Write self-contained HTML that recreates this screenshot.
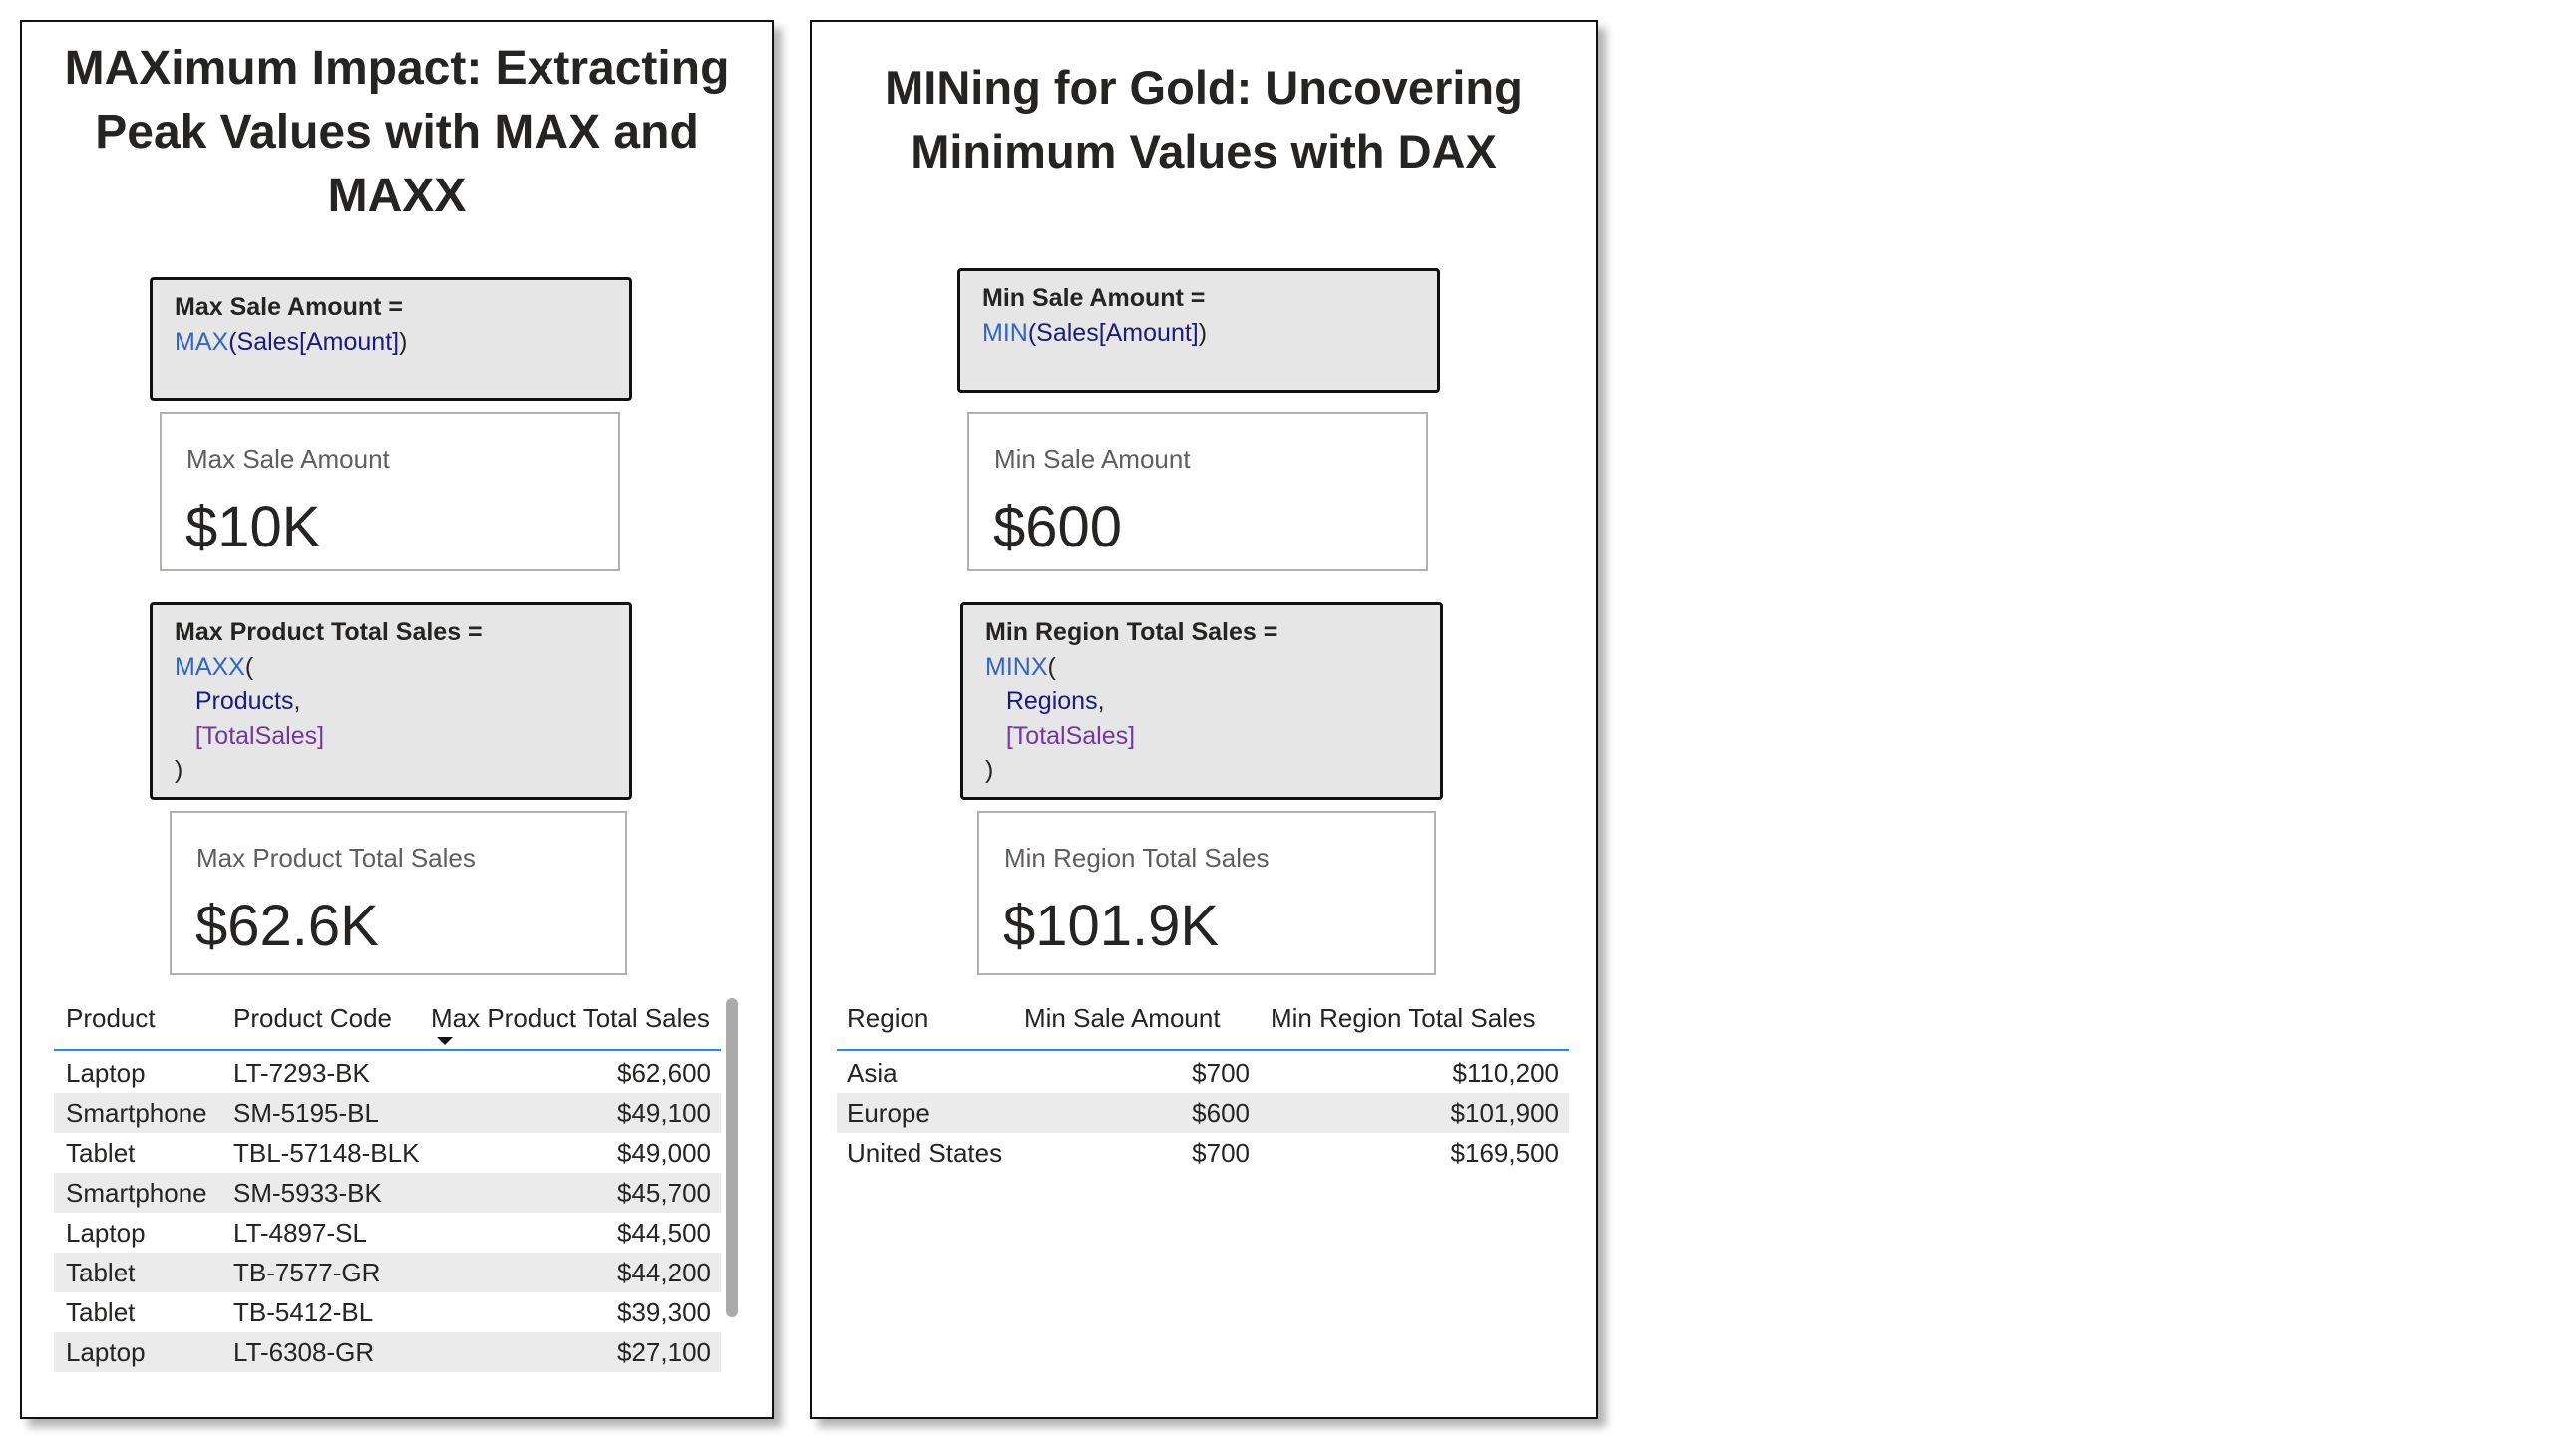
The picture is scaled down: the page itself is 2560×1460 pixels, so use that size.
<!DOCTYPE html>
<html><head><meta charset="utf-8"><style>
*{margin:0;padding:0;box-sizing:border-box}
body{width:2560px;height:1460px;background:#fff;position:relative;overflow:hidden;font-family:"Liberation Sans",Arial,sans-serif;color:#252423}
.abs{position:absolute}
.panel{position:absolute;border:2px solid #111;background:#fff;box-shadow:8px 8px 8px rgba(0,0,0,.3)}
.title{position:absolute;text-align:center;font-weight:bold;font-size:48px;line-height:64px;color:#252423}
.dax{position:absolute;background:#e6e6e6;border:3px solid #111;border-radius:4px;font-size:25px;line-height:34.5px;padding:10px 0 0 22px}
.dax b{color:#252423}
.fn{color:#3165c4}.tb{color:#1a1a80}.ms{color:#7436a6}
.card{position:absolute;border:2px solid #b3b0ad;background:#fff}
.card .l{position:absolute;left:25px;top:30px;font-size:26px;color:#605e5c}
.card .v{position:absolute;left:24px;top:80px;font-size:58px;color:#252423}
.row{position:absolute;height:40px;font-size:26px;line-height:40px}
.row span{position:absolute;white-space:nowrap}
.sh{background:#ebebeb}
</style></head><body>

<div class="panel" style="left:20px;top:20px;width:756px;height:1403px"></div>
<div class="panel" style="left:812px;top:20px;width:790px;height:1403px"></div>

<div class="title" style="left:22px;width:752px;top:37px">MAXimum Impact: Extracting<br>Peak Values with MAX and<br>MAXX</div>
<div class="title" style="left:814px;width:786px;top:56px;font-size:47px">MINing for Gold: Uncovering<br>Minimum Values with DAX</div>

<!-- left -->
<div class="dax" style="left:150px;top:278px;width:484px;height:124px"><b>Max Sale Amount =</b><br><span class="fn">MAX</span><span class="tb">(Sales[Amount]</span>)</div>
<div class="card" style="left:160px;top:413px;width:462px;height:160px"><div class="l">Max Sale Amount</div><div class="v">$10K</div></div>
<div class="dax" style="left:150px;top:604px;width:484px;height:198px"><b>Max Product Total Sales =</b><br><span class="fn">MAXX</span>(<br>&nbsp;&nbsp;&nbsp;<span class="tb">Products</span>,<br>&nbsp;&nbsp;&nbsp;<span class="ms">[TotalSales]</span><br>)</div>
<div class="card" style="left:170px;top:813px;width:459px;height:165px"><div class="l">Max Product Total Sales</div><div class="v">$62.6K</div></div>

<div class="row" style="left:54px;top:1001px;width:669px"><span style="left:12px">Product</span><span style="left:180px">Product Code</span><span style="left:378px">Max Product Total Sales</span></div>
<div class="abs" style="left:438px;top:1040px;width:0;height:0;border-left:8px solid transparent;border-right:8px solid transparent;border-top:8px solid #111"></div>
<div class="abs" style="left:54px;top:1052px;width:669px;height:2px;background:#1d8cf0"></div>
<div class="abs" style="left:728px;top:1001px;width:12px;height:320px;background:#aaa;border-radius:6px"></div>
<div class="abs" style="left:54px;top:1054px;width:669px;height:328px;overflow:hidden">
<div class="row" style="left:0;top:2px;width:669px"><span style="left:12px">Laptop</span><span style="left:180px">LT-7293-BK</span><span style="right:10px">$62,600</span></div>
<div class="row sh" style="left:0;top:42px;width:669px"><span style="left:12px">Smartphone</span><span style="left:180px">SM-5195-BL</span><span style="right:10px">$49,100</span></div>
<div class="row" style="left:0;top:82px;width:669px"><span style="left:12px">Tablet</span><span style="left:180px">TBL-57148-BLK</span><span style="right:10px">$49,000</span></div>
<div class="row sh" style="left:0;top:122px;width:669px"><span style="left:12px">Smartphone</span><span style="left:180px">SM-5933-BK</span><span style="right:10px">$45,700</span></div>
<div class="row" style="left:0;top:162px;width:669px"><span style="left:12px">Laptop</span><span style="left:180px">LT-4897-SL</span><span style="right:10px">$44,500</span></div>
<div class="row sh" style="left:0;top:202px;width:669px"><span style="left:12px">Tablet</span><span style="left:180px">TB-7577-GR</span><span style="right:10px">$44,200</span></div>
<div class="row" style="left:0;top:242px;width:669px"><span style="left:12px">Tablet</span><span style="left:180px">TB-5412-BL</span><span style="right:10px">$39,300</span></div>
<div class="row sh" style="left:0;top:282px;width:669px"><span style="left:12px">Laptop</span><span style="left:180px">LT-6308-GR</span><span style="right:10px">$27,100</span></div>
</div>

<!-- right -->
<div class="dax" style="left:960px;top:269px;width:484px;height:125px"><b>Min Sale Amount =</b><br><span class="fn">MIN</span><span class="tb">(Sales[Amount]</span>)</div>
<div class="card" style="left:970px;top:413px;width:462px;height:160px"><div class="l">Min Sale Amount</div><div class="v">$600</div></div>
<div class="dax" style="left:963px;top:604px;width:484px;height:198px"><b>Min Region Total Sales =</b><br><span class="fn">MINX</span>(<br>&nbsp;&nbsp;&nbsp;<span class="tb">Regions</span>,<br>&nbsp;&nbsp;&nbsp;<span class="ms">[TotalSales]</span><br>)</div>
<div class="card" style="left:980px;top:813px;width:460px;height:165px"><div class="l">Min Region Total Sales</div><div class="v">$101.9K</div></div>

<div class="row" style="left:839px;top:1001px;width:734px"><span style="left:10px">Region</span><span style="left:188px">Min Sale Amount</span><span style="left:435px">Min Region Total Sales</span></div>
<div class="abs" style="left:839px;top:1052px;width:734px;height:2px;background:#1d8cf0"></div>
<div class="row" style="left:839px;top:1056px;width:734px"><span style="left:10px">Asia</span><span style="right:320px">$700</span><span style="right:10px">$110,200</span></div>
<div class="row sh" style="left:839px;top:1096px;width:734px"><span style="left:10px">Europe</span><span style="right:320px">$600</span><span style="right:10px">$101,900</span></div>
<div class="row" style="left:839px;top:1136px;width:734px"><span style="left:10px">United States</span><span style="right:320px">$700</span><span style="right:10px">$169,500</span></div>

</body></html>
